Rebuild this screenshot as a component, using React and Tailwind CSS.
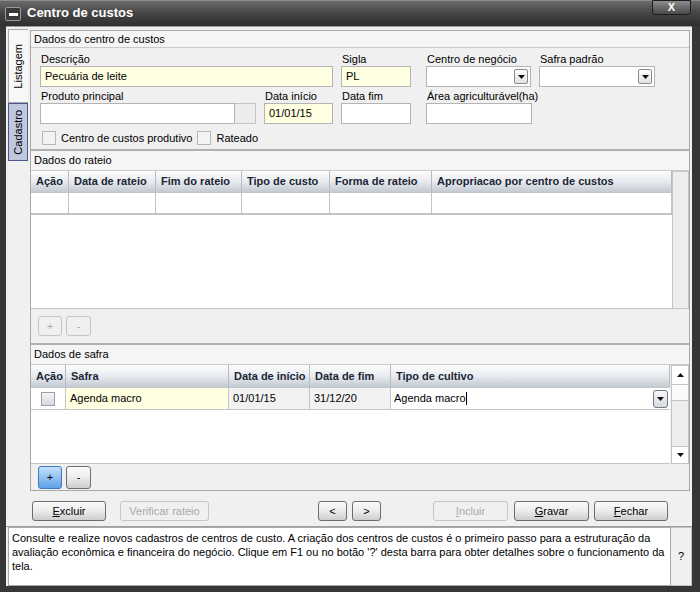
import React from "react";

const Arrow = ({ up }) => (
  <svg width="7" height="4" viewBox="0 0 7 4">
    <polygon points={up ? "0,4 7,4 3.5,0" : "0,0 7,0 3.5,4"} fill="#111" />
  </svg>
);

const Field = ({ label, w, yellow, value, select, button, className = "" }) => (
  <div className={"flex flex-col " + className} style={{ width: w }}>
    <span className="h-[14px] leading-[14px] pl-[1px] whitespace-nowrap">{label}</span>
    <div className="flex h-[21px]">
      <div
        className={
          "flex-1 flex items-center border border-[#b4b4b4] pl-[4px] pr-[2px] " +
          (yellow ? "bg-[#ffffe1]" : "bg-white")
        }
      >
        <span className="flex-1">{value}</span>
        {select && (
          <div className="w-[14px] h-[15px] border border-[#8a8a8a] rounded-[2px] bg-gradient-to-b from-white to-[#e2e2e2] flex items-center justify-center">
            <Arrow />
          </div>
        )}
      </div>
      {button && <div className="w-[21px] border border-l-0 border-[#c4c4c4] bg-[#ececec]" />}
    </div>
  </div>
);

const Btn = ({ children, w, disabled, blue, className = "" }) => (
  <div
    className={
      "h-[20px] flex items-center justify-center rounded-[3px] border " +
      (blue
        ? "border-[#3d78c0] bg-gradient-to-b from-[#c4e0fb] to-[#5ea2e6] text-black "
        : disabled
        ? "border-[#c6c6c6] bg-[#f0f0f0] text-[#a9a9a9] "
        : "border-[#6e6e6e] bg-gradient-to-b from-[#fbfbfb] via-[#ececec] to-[#cdcdcd] text-black ") +
      className
    }
    style={{ width: w }}
  >
    {children}
  </div>
);

const Check = ({ gray }) => (
  <div
    className={
      "w-[14px] h-[14px] border " +
      (gray ? "border-[#9aa3ad] bg-gradient-to-b from-[#f4f4f4] to-[#d8dbe0]" : "border-[#b8b8b8] bg-[#f3f3f3]")
    }
  />
);

const Head = ({ children, w, flex }) => (
  <div
    className={
      "h-full flex items-center px-[5px] font-bold text-[#1a2636] border-r border-[#b7bcc4] bg-gradient-to-b from-[#fdfdfd] via-[#e8ebef] to-[#c4cad2] whitespace-nowrap " +
      (flex ? "flex-1" : "")
    }
    style={flex ? {} : { width: w }}
  >
    {children}
  </div>
);

const SectionHead = ({ children }) => (
  <div className="h-[20px] flex items-center px-[3px] bg-[#f5f5f5] border-b border-[#c9c9c9]">{children}</div>
);

export default function App() {
  const rateioCols = [
    ["Ação", 38],
    ["Data de rateio", 87],
    ["Fim do rateio", 86],
    ["Tipo de custo", 88],
    ["Forma de rateio", 102],
  ];
  return (
    <div className="w-[700px] h-[592px] bg-[#363636] flex flex-col overflow-hidden text-[11px] text-black font-['Liberation_Sans',Arial,sans-serif]">
      {/* title bar */}
      <div className="h-[26px] flex items-start bg-gradient-to-b from-[#6b6b6b] via-[#444] to-[#2f2f2f] border-t border-[#8a8a8a]">
        <div className="mt-[6px] ml-[5px] w-[16px] h-[14px] bg-[#3a3a3a] border border-[#9a9a9a] rounded-[2px] flex items-center justify-center">
          <div className="w-[9px] h-[3px] bg-white" />
        </div>
        <span className="ml-[6px] mt-[4px] text-[13px] font-bold text-white leading-[16px]">Centro de custos</span>
        <div className="flex-1" />
        <div className="w-[39px] h-[15px] mr-[9px] -mt-[1px] border border-[#1c1c1c] rounded-b-[3px] bg-gradient-to-b from-[#8c8c8c] to-[#4a4a4a] flex items-center justify-center text-white font-bold text-[11px] leading-none">
          X
        </div>
      </div>

      {/* client */}
      <div className="flex-1 ml-[6px] mr-[8px] mb-[6px] bg-[#f0f0f0] flex flex-col border-t border-[#9a9a9a]">
        <div className="flex-1 flex">
          {/* tabs */}
          <div className="w-[24px] flex flex-col pt-[2px] pl-[2px]">
            <div className="h-[74px] w-[20px] bg-[#f7f7f7] border border-[#a9a9a9] border-r-0 flex items-center justify-center">
              <span className="[writing-mode:vertical-rl] rotate-180">Listagem</span>
            </div>
            <div className="h-[58px] w-[20px] bg-[#bfc8dc] border border-[#49598f] flex items-center justify-center">
              <span className="[writing-mode:vertical-rl] rotate-180">Cadastro</span>
            </div>
          </div>

          {/* main panel */}
          <div className="flex-1 mr-[2px] mt-[3px] border border-[#a8a8a8] flex flex-col">
            {/* Section 1 */}
            <div className="h-[120px] border-b-2 border-[#b0b0b0] flex flex-col">
              <div className="h-[17px] flex items-center px-[3px] bg-[#f5f5f5] border-b border-[#c9c9c9]">
                Dados do centro de custos
              </div>
              <div className="flex-1 pl-[9px] pt-[4px] flex flex-col">
                <div className="flex">
                  <Field label="Descrição" w={293} yellow value="Pecuária de leite" />
                  <Field label="Sigla" w={70} yellow value="PL" className="ml-[8px]" />
                  <Field label="Centro de negócio" w={105} select className="ml-[15px]" />
                  <Field label="Safra padrão" w={116} select className="ml-[8px]" />
                </div>
                <div className="flex mt-[2px]">
                  <Field label="Produto principal" w={216} button />
                  <Field label="Data início" w={69} yellow value="01/01/15" className="ml-[8px]" />
                  <Field label="Data fim" w={70} className="ml-[8px]" />
                  <Field label="Área agriculturável(ha)" w={106} className="ml-[15px]" />
                </div>
                <div className="flex items-center mt-[6px] pl-[2px]">
                  <Check />
                  <span className="ml-[5px]">Centro de custos produtivo</span>
                  <div className="ml-[5px]">
                    <Check />
                  </div>
                  <span className="ml-[5px]">Rateado</span>
                </div>
              </div>
            </div>

            {/* Section 2 */}
            <div className="h-[194px] border-b-2 border-[#b0b0b0] flex flex-col">
              <SectionHead>Dados do rateio</SectionHead>
              <div className="h-[138px] flex">
                <div className="flex-1 bg-white border-b border-[#c4c4c4] flex flex-col">
                  <div className="h-[22px] flex border-b border-[#c4c4c4]">
                    {rateioCols.map(([t, w]) => (
                      <Head key={t} w={w}>
                        {t}
                      </Head>
                    ))}
                    <Head flex>Apropriacao por centro de custos</Head>
                  </div>
                  <div className="h-[22px] flex border-b-2 border-[#c4c4c4]">
                    {rateioCols.map(([t, w]) => (
                      <div key={t} className="h-full border-r border-[#c4c4c4]" style={{ width: w }} />
                    ))}
                    <div className="flex-1 border-r border-[#c4c4c4]" />
                  </div>
                </div>
                <div className="w-[17px] border border-[#c4c4c4] bg-[#eeeeee]" />
              </div>
              <div className="flex-1 flex items-center pl-[7px] gap-[4px]">
                <Btn w={24} disabled>+</Btn>
                <Btn w={25} disabled>-</Btn>
              </div>
            </div>

            {/* Section 3 */}
            <div className="flex-1 flex flex-col">
              <SectionHead>Dados de safra</SectionHead>
              <div className="h-[99px] flex">
                <div className="flex-1 bg-white border-b border-[#c4c4c4] flex flex-col">
                  <div className="h-[23px] flex border-b border-[#c4c4c4]">
                    <Head w={35}>Ação</Head>
                    <Head w={163}>Safra</Head>
                    <Head w={81}>Data de início</Head>
                    <Head w={81}>Data de fim</Head>
                    <Head flex>Tipo de cultivo</Head>
                  </div>
                  <div className="h-[22px] flex border-b border-[#c4c4c4]">
                    <div className="w-[35px] border-r border-[#c4c4c4] flex items-center justify-center">
                      <Check gray />
                    </div>
                    <div className="w-[163px] border-r border-[#c4c4c4] bg-[#ffffe1] flex items-center pl-[4px]">
                      Agenda macro
                    </div>
                    <div className="w-[81px] border-r border-[#c4c4c4] bg-[#f2f2f2] flex items-center pl-[4px]">
                      01/01/15
                    </div>
                    <div className="w-[81px] border-r border-[#c4c4c4] bg-[#f2f2f2] flex items-center pl-[4px]">
                      31/12/20
                    </div>
                    <div className="flex-1 flex items-center pl-[3px] pr-[2px]">
                      <span>Agenda macro</span>
                      <span className="w-px h-[13px] bg-black" />
                      <div className="flex-1" />
                      <div className="w-[15px] h-[18px] border border-[#6f7b8c] rounded-[3px] bg-gradient-to-b from-[#f8f8f8] to-[#d6d9de] flex items-center justify-center">
                        <Arrow />
                      </div>
                    </div>
                  </div>
                </div>
                <div className="w-[18px] ml-[1px] border border-[#c4c4c4] bg-[#eeeeee] flex flex-col">
                  <div className="h-[19px] border-b border-[#c4c4c4] bg-white flex items-center justify-center">
                    <Arrow up />
                  </div>
                  <div className="h-[16px] border-b border-[#c4c4c4] bg-[#fafafa]" />
                  <div className="flex-1" />
                  <div className="h-[17px] border-t border-[#c4c4c4] bg-white flex items-center justify-center">
                    <Arrow />
                  </div>
                </div>
              </div>
              <div className="flex-1 flex items-center pl-[7px] gap-[4px]">
                <Btn w={24} blue className="h-[23px]">+</Btn>
                <Btn w={25} className="h-[23px]">-</Btn>
              </div>
            </div>
          </div>
        </div>

        {/* bottom buttons */}
        <div className="h-[34px] mt-[1px] flex items-center pt-[4px] pl-[26px]">
          <Btn w={74}>
            <span><u>E</u>xcluir</span>
          </Btn>
          <Btn w={89} disabled className="ml-[14px]">Verificar rateio</Btn>
          <Btn w={29} className="ml-[109px]">&lt;</Btn>
          <Btn w={29} className="ml-[5px]">&gt;</Btn>
          <Btn w={75} disabled className="ml-[52px]">
            <span><u>I</u>ncluir</span>
          </Btn>
          <Btn w={75} className="ml-[6px]">
            <span><u>G</u>ravar</span>
          </Btn>
          <Btn w={74} className="ml-[5px]">
            <span><u>F</u>echar</span>
          </Btn>
        </div>

        {/* help */}
        <div className="h-[60px] flex border-t border-[#a0a0a0]">
          <div className="w-[663px] ml-[2px] bg-white border border-[#a9a9a9] px-[3px] pt-[3px] text-[11px] leading-[14px] whitespace-nowrap overflow-hidden">
            Consulte e realize novos cadastros de centros de custo. A criação dos centros de custos é o primeiro passo para a estruturação da
            <br />
            avaliação econômica e financeira do negócio. Clique em F1 ou no botão '?' desta barra para obter detalhes sobre o funcionamento da
            <br />
            tela.
          </div>
          <div className="flex-1 flex items-center justify-center border border-l-0 border-[#c0c0c0]">?</div>
        </div>
      </div>
    </div>
  );
}
